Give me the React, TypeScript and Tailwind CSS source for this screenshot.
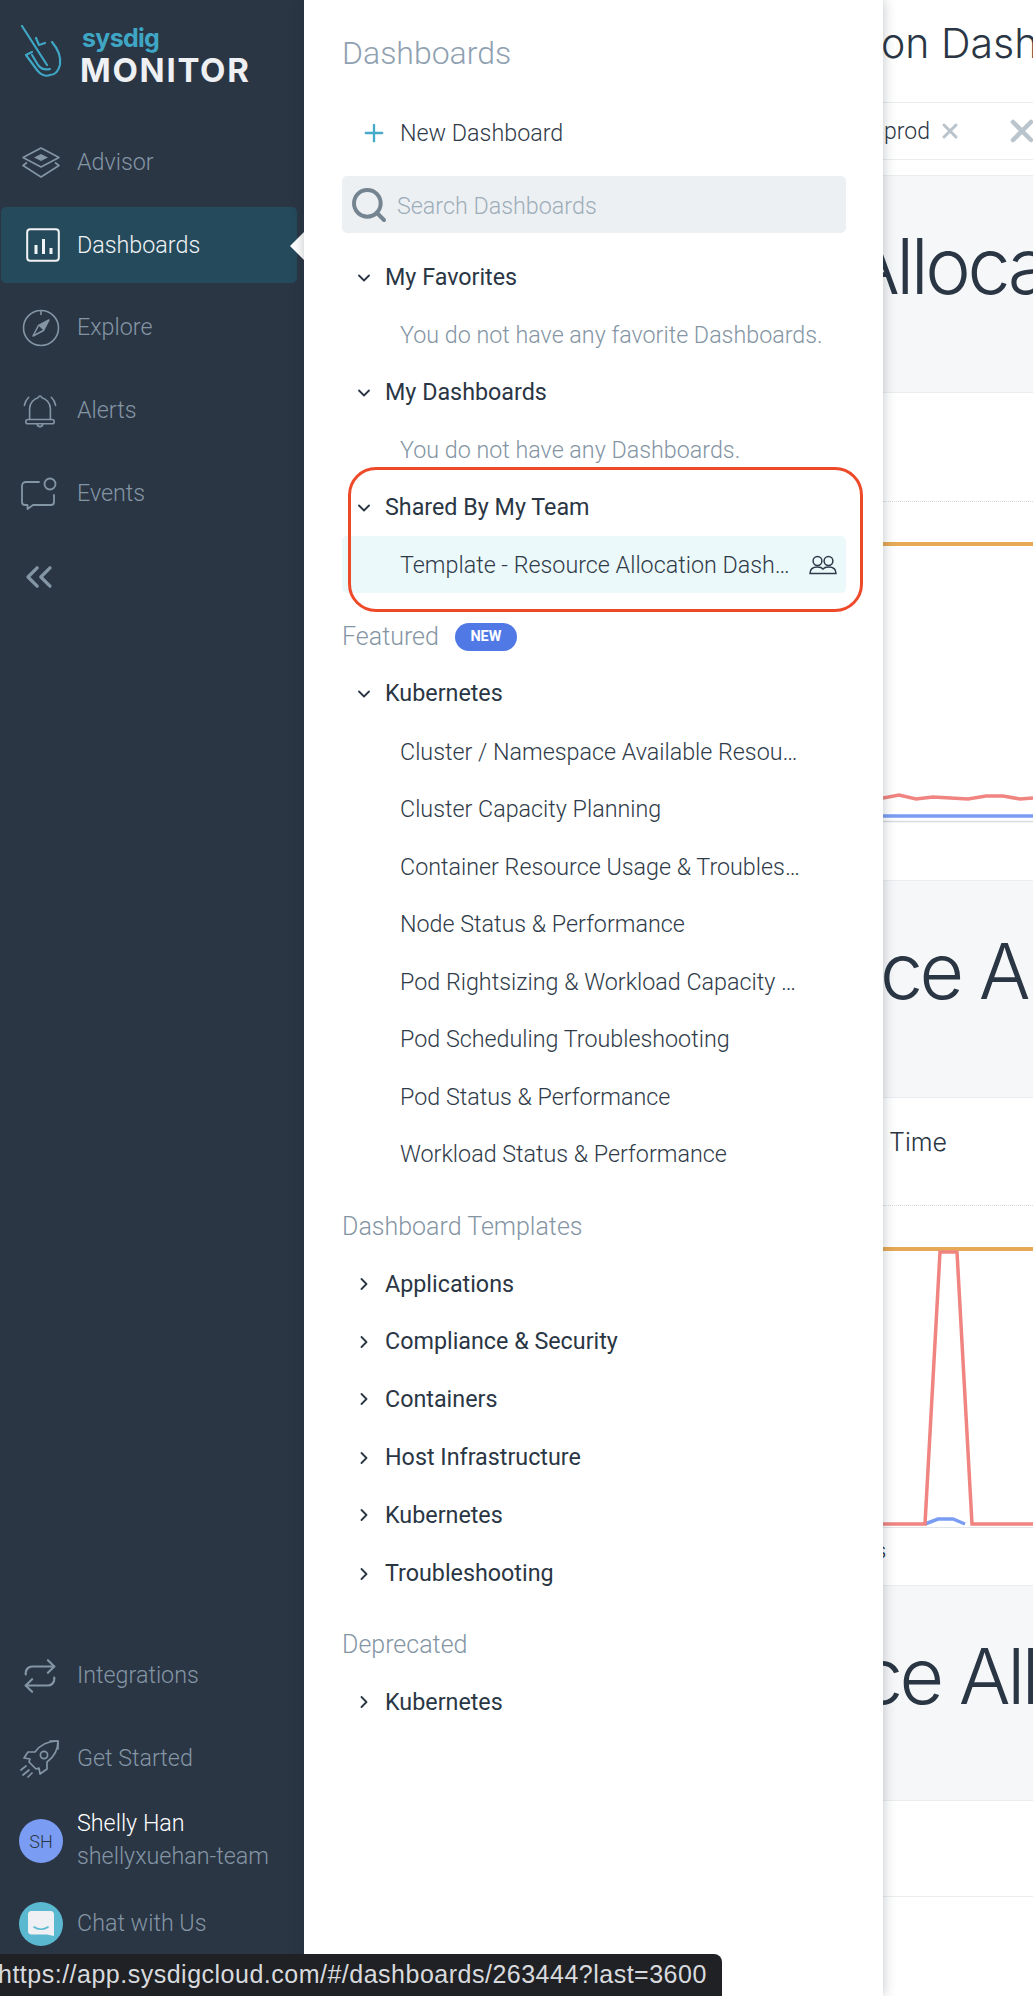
import { ChevronDown, ChevronRight, ChevronsLeft, Plus, Repeat, Search, X } from "lucide-react";

const NAV_ICON = "w-[38px] h-[38px] shrink-0";

function AdvisorIcon() {
  return (
    <svg viewBox="0 0 40 32" className="w-[40px] h-[32px] shrink-0" fill="none" stroke="currentColor" strokeWidth="1.6" strokeLinejoin="round">
      <path d="M20 1 L38 10.5 L20 20 L2 10.5 Z" />
      <path d="M20 7 L27 10.5 L20 14 L13 10.5 Z" fill="currentColor" stroke="none" />
      <path d="M6 15.5 L2 18.5 L20 30 L38 18.5 L34 15.5" />
    </svg>
  );
}

function DashboardsIcon() {
  return (
    <svg viewBox="0 0 34 34" className="w-[34px] h-[34px] shrink-0" fill="none" stroke="currentColor">
      <rect x="1.2" y="1.2" width="31.6" height="31.6" rx="3" strokeWidth="2" />
      <path d="M10 26 V17 M17.5 26 V11 M25 26 V20" strokeWidth="3" />
    </svg>
  );
}

function ExploreIcon() {
  return (
    <svg viewBox="0 0 38 38" className={`${NAV_ICON} ml-[1px]`} fill="none" stroke="currentColor" strokeWidth="1.6">
      <circle cx="19" cy="19" r="17.5" />
      <path d="M19 1.5 V6" />
      <path d="M27 11 L21.5 21.5 L11 27 L16.5 16.5 Z" strokeLinejoin="round" />
      <path d="M27 11 L21.5 21.5 L16.5 16.5 Z" fill="currentColor" stroke="none" />
    </svg>
  );
}

function AlertsIcon() {
  return (
    <svg viewBox="0 0 36 36" className="w-[34px] h-[34px] shrink-0 mx-[2px]" fill="none" stroke="currentColor" strokeWidth="1.7" strokeLinecap="round" strokeLinejoin="round">
      <path d="M7 27 V16 C7 9 12 5 16 4 C17 1.5 19 1.5 20 4 C24 5 29 9 29 16 V27" />
      <rect x="3" y="27" width="30" height="4.5" rx="2.2" />
      <path d="M15 31.5 C15 35.5 21 35.5 21 31.5" />
      <path d="M6 3.5 C3.5 6 2 9 1.5 12 M30 3.5 C32.5 6 34 9 34.5 12" />
    </svg>
  );
}

function EventsIcon() {
  return (
    <svg viewBox="0 0 36 34" className="w-[36px] h-[34px] shrink-0" fill="none" stroke="currentColor" strokeWidth="1.8" strokeLinecap="round" strokeLinejoin="round">
      <path d="M18 5 H5 C2.5 5 1 6.5 1 9 V25 C1 27 2.5 28 4 28 H6.5 V32 L12 28 H30 C32 28 33 27 33 25 V18" />
      <circle cx="29" cy="7" r="5.5" />
    </svg>
  );
}

function RocketIcon() {
  return (
    <svg viewBox="0 0 42 40" className="w-[42px] h-[40px] shrink-0 -ml-[3px]" fill="none" stroke="currentColor" strokeWidth="1.7" strokeLinecap="round" strokeLinejoin="round">
      <path d="M40 2 C30 2 22 6 17 13 H10 L6 19 L12 20 L11 23 L18 30 L21 29 L22 35 L29 30 V23 C36 18 40 12 40 2 Z" />
      <path d="M40 2 L32 2 M40 2 V10" />
      <circle cx="26" cy="16" r="3.6" />
      <path d="M8 27 L3 31 M11 31 L5 36 M14 34 L10 38" />
    </svg>
  );
}

function Logo() {
  return (
    <svg viewBox="0 0 44 54" className="w-[44px] h-[54px] shrink-0 text-[#3fa6c5]" fill="none" stroke="currentColor" strokeWidth="2.2" strokeLinecap="round" strokeLinejoin="round">
      <path d="M2 1 L27 40" />
      <path d="M16 13 L19 20 L25 18" />
      <path d="M32 17 C38 24 41 33 40 40 C38 47 34 50 30 50 C25 52 20 49 17 45 L6 30 L12 27" />
      <path d="M12 30 L18 40 C21 44 26 45 30 44" />
    </svg>
  );
}

function SideRow({ icon, label }: { icon: React.ReactNode; label: string }) {
  return (
    <div className="h-[83px] flex items-center pl-[21px] text-[#8495a4]">
      <div className="w-[56px] flex items-center">{icon}</div>
      <span className="text-[23.3px] font-light">{label}</span>
    </div>
  );
}

function Sidebar() {
  return (
    <aside className="w-[304px] shrink-0 h-full bg-[#2a3644] flex flex-col relative">
      <div className="h-[121px] flex pl-[20px] pt-[25px]">
        <Logo />
        <div className="ml-[16px] font-['Inter',sans-serif]">
          <div className="text-[25px] leading-[27px] font-bold text-[#3fa6c5] tracking-[-0.7px] pl-[2px]">sysdig</div>
          <div className="text-[33px] leading-[36px] font-bold text-[#eef0f3] tracking-[1.7px]">MONITOR</div>
        </div>
      </div>
      <SideRow icon={<AdvisorIcon />} label="Advisor" />
      <div className="h-[76px] ml-[1px] mr-[7px] my-[3px] rounded-[5px] bg-[#244a5c] flex items-center pl-[25px] text-[#f1f3f5]">
        <div className="w-[51px]">
          <DashboardsIcon />
        </div>
        <span className="text-[23.3px] font-light">Dashboards</span>
      </div>
      <SideRow icon={<ExploreIcon />} label="Explore" />
      <SideRow icon={<AlertsIcon />} label="Alerts" />
      <SideRow icon={<EventsIcon />} label="Events" />
      <div className="h-[83px] flex items-center pl-[17px] text-[#8495a4]">
        <ChevronsLeft size={44} strokeWidth={1.8} />
      </div>
      <div className="flex-1" />
      <SideRow icon={<Repeat size={38} strokeWidth={1.4} />} label="Integrations" />
      <SideRow icon={<RocketIcon />} label="Get Started" />
      <div className="h-[82px] flex items-center pl-[19px]">
        <div className="w-[44px] h-[44px] rounded-full bg-[#7a9df3] text-[#2a3644] flex items-center justify-center text-[18px] font-light">SH</div>
        <div className="ml-[14px] -mt-[3px]">
          <div className="text-[23.3px] leading-[33px] font-light text-white">Shelly Han</div>
          <div className="text-[23.3px] leading-[33px] font-light text-[#8495a4]">shellyxuehan-team</div>
        </div>
      </div>
      <div className="h-[83px] mb-[31px] flex items-center pl-[19px]">
        <div className="w-[44px] h-[44px] rounded-full bg-[#5ab8d0] flex items-center justify-center">
          <svg viewBox="0 0 26 26" className="w-[26px] h-[26px]">
            <path d="M3 0 H23 C24.5 0 26 1.5 26 3 V25 L19 23.5 H3 C1.5 23.5 0 22 0 20.5 V3 C0 1.5 1.5 0 3 0 Z" fill="#eef0f3" />
            <path d="M6 16 C10 19 16 19 20 16" fill="none" stroke="#5ab8d0" strokeWidth="1.6" strokeLinecap="round" />
          </svg>
        </div>
        <span className="ml-[14px] text-[23.3px] font-light text-[#8495a4]">Chat with Us</span>
      </div>
      <svg viewBox="0 0 14 28" className="absolute left-[290px] top-[232px] w-[14px] h-[28px]">
        <polygon points="14,0 0,14 14,28" fill="#ffffff" />
      </svg>
    </aside>
  );
}

function GroupRow({ label, open }: { label: string; open?: boolean }) {
  return (
    <div className="h-[57.5px] pt-[2px] flex items-center pl-[12px] text-[#2a3644]">
      <div className="w-[31px]">{open ? <ChevronDown size={20} strokeWidth={2.2} /> : <ChevronRight size={20} strokeWidth={2.2} />}</div>
      <span className="text-[23.3px] font-normal">{label}</span>
    </div>
  );
}

function ItemRow({ label, muted }: { label: string; muted?: boolean }) {
  return (
    <div className={`h-[57.5px] pt-[2px] flex items-center pl-[58px] ${muted ? "text-[#8495a4]" : "text-[#2f3b49]"}`}>
      <span className={`text-[23.3px] font-light ${muted ? "whitespace-nowrap" : "truncate max-w-[400px]"}`}>{label}</span>
    </div>
  );
}

function SectionTitle({ children }: { children: React.ReactNode }) {
  return <span className="text-[25px] font-light text-[#8495a4]">{children}</span>;
}

function Panel() {
  return (
    <div className="w-[579px] shrink-0 h-full bg-white relative z-10 pl-[38px] pr-[37px] shadow-[0_0_12px_rgba(30,40,50,0.28)]">
      <div className="h-[103px] pt-[31px] text-[32px] leading-[44px] font-light text-[#8fa1b1]">Dashboards</div>
      <div className="h-[58px] pt-[2px] flex items-center pl-[20px] text-[#2f3b49]">
        <Plus size={28} strokeWidth={2} className="text-[#46a9c9] mr-[12px] -ml-[2px]" />
        <span className="text-[23.3px] font-light">New Dashboard</span>
      </div>
      <div className="mt-[15px] h-[57px] rounded-[5px] bg-[#edf0f3] flex items-center pl-[7px]">
        <Search size={40} strokeWidth={2.4} className="text-[#748491]" />
        <span className="ml-[8px] pt-[3px] text-[23.3px] font-light text-[#9dadb9]">Search Dashboards</span>
      </div>
      <div className="mt-[15px]">
        <GroupRow label="My Favorites" open />
        <ItemRow label="You do not have any favorite Dashboards." muted />
        <GroupRow label="My Dashboards" open />
        <ItemRow label="You do not have any Dashboards." muted />
        <GroupRow label="Shared By My Team" open />
        <div className="h-[57.5px] pt-[2px] flex items-center pl-[58px] pr-[9px] bg-[#ecf9fb] rounded-[5px] text-[#2f3b49]">
          <span className="text-[23.3px] font-light truncate flex-1 mr-[12px]">Template - Resource Allocation Dashboard</span>
          <svg viewBox="0 0 28 20" className="w-[28px] h-[20px] shrink-0" fill="none" stroke="currentColor" strokeWidth="1.5">
            <circle cx="8.5" cy="6" r="4.4" />
            <circle cx="19.5" cy="6" r="4.4" />
            <path d="M1 18.5 C1 13.5 5 12 8.5 12 C11 12 13 12.7 14 14 C15 12.7 17 12 19.5 12 C23 12 27 13.5 27 18.5 Z" />
          </svg>
        </div>
      </div>
      <div className="mt-[15px] h-[56px] pt-[2px] flex items-center">
        <SectionTitle>Featured</SectionTitle>
        <span className="ml-[16px] h-[28px] w-[62px] rounded-full bg-[#5079e6] text-white text-[14.5px] font-bold flex items-center justify-center">NEW</span>
      </div>
      <GroupRow label="Kubernetes" open />
      <div className="mt-[1px]">
        <ItemRow label="Cluster / Namespace Available Resource Quotas" />
        <ItemRow label="Cluster Capacity Planning" />
        <ItemRow label="Container Resource Usage & Troubleshooting" />
        <ItemRow label="Node Status & Performance" />
        <ItemRow label="Pod Rightsizing & Workload Capacity Optimization" />
        <ItemRow label="Pod Scheduling Troubleshooting" />
        <ItemRow label="Pod Status & Performance" />
        <ItemRow label="Workload Status & Performance" />
      </div>
      <div className="mt-[15px] h-[57px] pt-[2px] flex items-center">
        <SectionTitle>Dashboard Templates</SectionTitle>
      </div>
      <GroupRow label="Applications" />
      <GroupRow label="Compliance & Security" />
      <GroupRow label="Containers" />
      <div className="mt-[1px]">
        <GroupRow label="Host Infrastructure" />
        <GroupRow label="Kubernetes" />
      </div>
      <div className="mt-[1px]">
        <GroupRow label="Troubleshooting" />
      </div>
      <div className="mt-[14px] h-[57px] pt-[2px] flex items-center">
        <SectionTitle>Deprecated</SectionTitle>
      </div>
      <GroupRow label="Kubernetes" />
      {/* annotation drawn over the list */}
      <div className="absolute left-[44px] top-[467px] w-[515px] h-[145px] border-[3px] border-[#ee4a2a] rounded-[28px]" />
    </div>
  );
}

function Main() {
  return (
    <main className="flex-1 min-w-0 h-full overflow-hidden bg-white font-['Inter',sans-serif] text-[#2a3644] whitespace-nowrap">
      <div className="h-[103px] border-b border-[#e9edf0] flex items-center">
        <span className="text-[41px] font-light -ml-[2px] -mt-[14px]">on Dashboard</span>
      </div>
      <div className="h-[57px] border-b border-[#e9edf0] flex items-center font-['Roboto',sans-serif]">
        <span className="text-[23px] font-light ml-[1px] pt-[2px] shrink-0">prod</span>
        <X size={24} strokeWidth={3} className="ml-[8px] text-[#b9c4cd] shrink-0" />
        <X size={36} strokeWidth={3} className="ml-[42px] text-[#b9c4cd] shrink-0" />
      </div>
      <div className="mt-[15px] h-[218px] bg-[#f6f7f9] border-y border-[#e9edf0] overflow-hidden">
        <div className="text-[77px] font-light -ml-[35px] mt-[40px] leading-[100px] tracking-[-3.5px]">Allocation</div>
      </div>
      <div className="h-[109px] border-b border-dotted border-[#d5dade]" />
      <svg viewBox="0 0 150 321" className="w-[150px] h-[321px] block">
        <path d="M0 42 H150" stroke="#e6a955" strokeWidth="4" fill="none" />
        <path d="M0 296 L16 293 L33 297 L50 295 L85 297 L103 294 L120 294 L137 297 L150 296" stroke="#f08480" strokeWidth="3.5" fill="none" />
        <path d="M0 314 H150" stroke="#7a9df3" strokeWidth="3.5" fill="none" />
        <path d="M0 319.5 H150" stroke="#d8dcdf" strokeWidth="1.5" fill="none" />
      </svg>
      <div className="h-[57px]" />
      <div className="h-[218px] bg-[#f6f7f9] border-y border-[#e9edf0] overflow-hidden">
        <div className="text-[77px] font-light -ml-[3px] mt-[40px] leading-[100px] tracking-[-3.5px]">ce Allocation</div>
      </div>
      <div className="h-[108px] border-b border-dotted border-[#d5dade] pt-[26px]">
        <span className="text-[25px] font-light ml-[6px]">Time</span>
      </div>
      <svg viewBox="0 0 150 322" className="w-[150px] h-[322px] block">
        <path d="M0 43 H150" stroke="#e6a955" strokeWidth="4" fill="none" />
        <path d="M42 318 L55 313 H70 L82 318" stroke="#7a9df3" strokeWidth="3.5" fill="none" />
        <path d="M0 318 H42 L57 46 H74 L89 318 H150" stroke="#f08480" strokeWidth="3.5" fill="none" />
        <path d="M0 322 H150" stroke="#d8dcdf" strokeWidth="1.5" fill="none" />
      </svg>
      <div className="h-[57px] pt-[6px] -ml-[8px] text-[22px] font-light">s</div>
      <div className="h-[216px] bg-[#f6f7f9] border-y border-[#e9edf0] overflow-hidden">
        <div className="text-[77px] font-light -ml-[23px] mt-[40px] leading-[100px] tracking-[-3.5px]">ce Allocation</div>
      </div>
      <div className="h-[96px] border-b border-[#e9edf0]" />
    </main>
  );
}

export default function App() {
  return (
    <div className="relative w-[1033px] h-[1996px] overflow-hidden flex font-['Roboto',sans-serif]">
      <Sidebar />
      <Panel />
      <Main />
      {/* browser link preview */}
      <div className="absolute left-0 bottom-0 z-20 w-[722px] h-[42px] bg-[#202124] rounded-tr-[8px] overflow-hidden flex items-center text-[#d8dade] font-['Liberation_Sans',sans-serif] text-[25px] whitespace-nowrap tracking-[0.5px]">
        <span className="-ml-[2px]">https://app.sysdigcloud.com/#/dashboards/263444?last=3600</span>
      </div>
    </div>
  );
}
